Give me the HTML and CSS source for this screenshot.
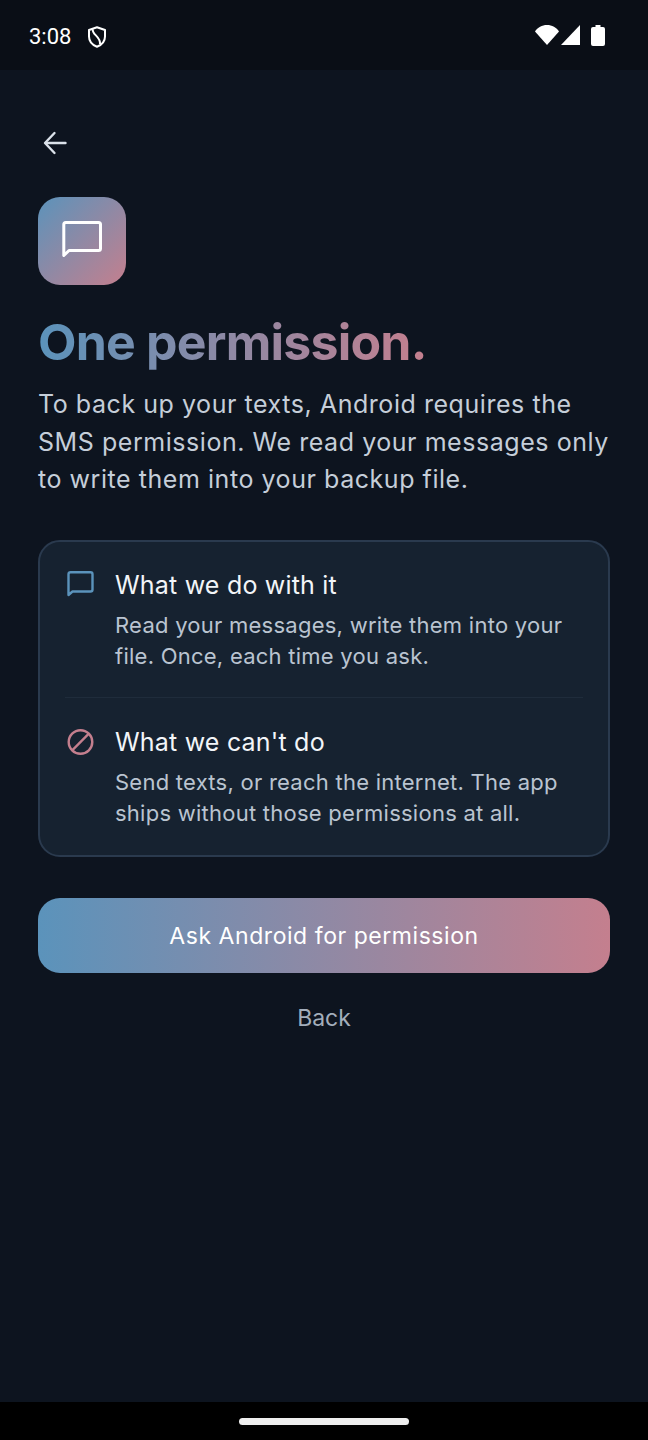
FILE: index.html
```html
<!DOCTYPE html>
<html lang="en">
<head>
    <meta charset="UTF-8">
    <meta name="viewport" content="width=device-width, initial-scale=1.0">
    <title>One permission</title>
    <link rel="stylesheet" href="styles.css">
</head>
<body>

<div class="statusbar">
    <div class="status-left">
        <span class="clock">3:08</span>
        <svg class="shield" width="18" height="22" viewBox="0 0 18 22" fill="none" stroke="#fff" stroke-width="2" stroke-linejoin="round">
            <path d="M9 1.2 L17 4 V10.5 C17 15.5 13.5 19 9 20.8 C4.5 19 1 15.5 1 10.5 V4 Z"/>
            <path d="M4.8 3.2 C3.6 8.5 12.8 10.5 12 18"/>
        </svg>
    </div>
    <div class="status-right">
        <svg width="24" height="20" viewBox="0 0 24 20"><path fill="#fff" d="M0 6.5 C2.5 2.5 7 0 12 0 C17 0 21.5 2.5 24 6.5 L12 20 Z"/></svg>
        <svg width="19" height="20" viewBox="0 0 19 20"><path fill="#fff" d="M19 0 V20 H0 Z"/></svg>
        <svg class="battery" width="14" height="21" viewBox="0 0 14 21"><path fill="#fff" d="M4.5 0 H9.5 V2 H12 Q14 2 14 4 V19 Q14 21 12 21 H2 Q0 21 0 19 V4 Q0 2 2 2 H4.5 Z"/></svg>
    </div>
</div>

<div class="screen">
    <button class="back-arrow">
        <svg width="24" height="24" viewBox="0 0 24 24" fill="none" stroke="#dbe2ea" stroke-width="2.4" stroke-linecap="round" stroke-linejoin="round">
            <path d="M22.5 12 H3"/>
            <path d="M11.5 2 L2 12 L11.5 22"/>
        </svg>
    </button>

    <div class="app-icon">
        <svg width="44" height="44" viewBox="0 0 44 44" fill="none" stroke="#fff" stroke-width="3" stroke-linejoin="round" stroke-linecap="round">
            <path d="M3.8 36.5 V5.5 Q3.8 3.5 5.8 3.5 H38.5 Q40.5 3.5 40.5 5.5 V29.5 Q40.5 31.5 38.5 31.5 H9 Z"/>
        </svg>
    </div>

    <h1 class="title">One permission.</h1>
    <p class="lead">To back up your texts, Android requires the SMS permission. We read your messages only to write them into your backup file.</p>

    <div class="card">
        <div class="card-row">
            <svg class="row-icon" width="29" height="28" viewBox="0 0 29 28" fill="none" stroke="#5b93bb" stroke-width="2.4" stroke-linejoin="round" stroke-linecap="round">
                <path d="M2.5 24 V3.2 Q2.5 1.2 4.5 1.2 H24.5 Q26.5 1.2 26.5 3.2 V18.5 Q26.5 20.5 24.5 20.5 H6.5 Z"/>
            </svg>
            <div class="row-text">
                <h2>What we do with it</h2>
                <p>Read your messages, write them into your file. Once, each time you ask.</p>
            </div>
        </div>
        <div class="divider"></div>
        <div class="card-row">
            <svg class="row-icon" width="29" height="28" viewBox="0 0 29 28" fill="none" stroke="#c47f8e" stroke-width="2.4">
                <circle cx="14.5" cy="14" r="11.8"/>
                <path d="M6.2 22.3 L22.8 5.7"/>
            </svg>
            <div class="row-text">
                <h2>What we can't do</h2>
                <p>Send texts, or reach the internet. The app ships without those permissions at all.</p>
            </div>
        </div>
    </div>

    <button class="primary">Ask Android for permission</button>
    <button class="secondary">Back</button>
</div>

<div class="navbar">
    <div class="home-pill"></div>
</div>

</body>
</html>
```

FILE: styles.css
```css
* {
    box-sizing: border-box;
}

body {
    margin: 0;
    height: 1440px;
    overflow: hidden;
    display: flex;
    flex-direction: column;
    background-color: #0d141f;
    color: #fff;
    font-family: Inter, "Liberation Sans", sans-serif;
}

button {
    font-family: inherit;
    border: none;
    background: none;
    padding: 0;
}

.statusbar {
    height: 70px;
    flex-shrink: 0;
    display: flex;
    justify-content: space-between;
    align-items: flex-start;
    padding: 25px 43px 0 29px;
    background-color: #0a0e16;
}
.status-left {
    display: flex;
    align-items: center;
    gap: 17px;
    height: 22px;
}
.clock {
    font-family: Roboto, sans-serif;
    font-size: 22px;
    line-height: 24px;
    margin-top: 2px;
    color: #fff;
}
.shield {
    margin-top: 1px;
}
.status-right {
    display: flex;
    align-items: flex-start;
    gap: 2px;
}
.battery {
    margin-left: 9px;
}

.screen {
    flex: 1;
    display: flex;
    flex-direction: column;
    padding: 0 38px;
}

.back-arrow {
    width: 24px;
    height: 24px;
    margin: 61px 0 0 5px;
}

.app-icon {
    width: 88px;
    height: 88px;
    margin-top: 42px;
    border-radius: 22px;
    display: flex;
    align-items: center;
    justify-content: center;
    background: linear-gradient(135deg, #5b93bb, #c47f8e);
}

.title {
    margin: 28px 0 0;
    font-size: 50px;
    line-height: 58px;
    font-weight: 650;
    letter-spacing: -0.8px;
    width: max-content;
    background: linear-gradient(90deg, #5b93bb, #c47f8e);
    -webkit-background-clip: text;
    background-clip: text;
    color: transparent;
}

.lead {
    margin: 15px 0 0;
    font-size: 25px;
    line-height: 37.5px;
    letter-spacing: 0.55px;
    color: #c5ced9;
}

.card {
    margin-top: 41.5px;
    border: 2px solid #2a3a4e;
    border-radius: 22px;
    background-color: #162230;
    padding: 26px 26px 26px;
}
.card-row {
    display: flex;
    gap: 20px;
}
.row-icon {
    flex-shrink: 0;
    margin-top: 3px;
}
.row-text h2 {
    margin: 0;
    font-size: 25px;
    line-height: 34px;
    font-weight: 400;
    letter-spacing: 0.2px;
    color: #f2f5f8;
}
.row-text p {
    margin: 8px 0 0;
    font-size: 22px;
    line-height: 31px;
    letter-spacing: 0.25px;
    color: #bac4d0;
}
.divider {
    height: 1px;
    margin: 25px -1px 27px;
    background-color: #1f2c3b;
}

.primary {
    height: 75px;
    margin-top: 41px;
    border-radius: 22px;
    background: linear-gradient(90deg, #5b93bb, #c47f8e);
    color: #fff;
    font-size: 23px;
    letter-spacing: 0.55px;
}

.secondary {
    height: 44px;
    margin-top: 23px;
    color: #a3aebb;
    font-size: 23px;
}

.navbar {
    height: 38px;
    flex-shrink: 0;
    display: flex;
    justify-content: center;
    padding-top: 16px;
    background-color: #000;
}
.home-pill {
    width: 170px;
    height: 7px;
    border-radius: 4px;
    background-color: #eee;
}
```
